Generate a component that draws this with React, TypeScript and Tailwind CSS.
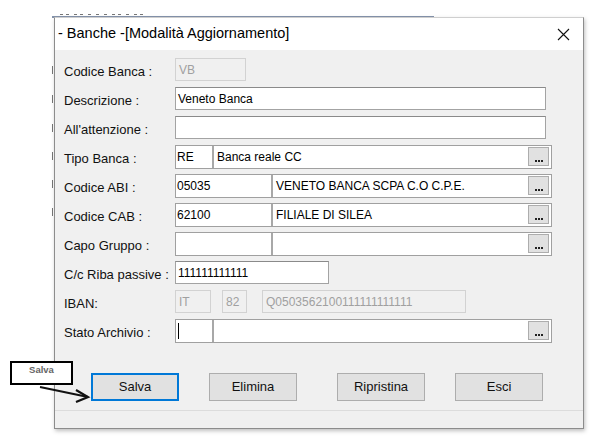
import React from 'react';

const font = { fontFamily: '"Liberation Sans", Arial, sans-serif' };

const Row: React.FC<{ label: string; children: React.ReactNode }> = ({ label, children }) => (
  <div className="flex h-[29px] items-center">
    <div className="w-[111px] mt-[5px] text-[13px] text-[#111] whitespace-nowrap">{label}</div>
    {children}
  </div>
);

const TextBox: React.FC<{ value?: string; width: string }> = ({ value = '', width }) => (
  <div className={`${width} h-[23px] bg-white border border-[#a3a3a3] border-t-[#8a8a8a] flex items-center pl-[2px] text-[12px] text-black whitespace-nowrap overflow-hidden`}>
    {value}
  </div>
);

const DisabledBox: React.FC<{ value: string; width: string }> = ({ value, width }) => (
  <div className={`${width} h-[23px] bg-[#f0f0f0] border border-[#d2d2d2] flex items-center pl-[3px] text-[12px] text-[#a0a0a0] whitespace-nowrap overflow-hidden`}>
    {value}
  </div>
);

const DotsButton = () => (
  <div className="w-[21px] h-[19px] mr-[2px] bg-[#e1e1e1] border border-[#adadad] flex items-end justify-center gap-[1px] pb-[3px]">
    <div className="w-[2px] h-[2px] bg-[#222]" />
    <div className="w-[2px] h-[2px] bg-[#222]" />
    <div className="w-[2px] h-[2px] bg-[#222]" />
  </div>
);

const Combo: React.FC<{ code: string; text: string; codeWidth: string; caret?: boolean }> = ({ code, text, codeWidth, caret }) => (
  <div className="w-[377px] h-[24px] bg-white border border-[#a0a0a0] flex items-center">
    <div className={`${codeWidth} h-full flex items-center pl-[1px] text-[12px] text-black border-r-2 border-[#a8a8a8]`}>
      {caret ? <div className="w-px h-[16px] bg-black ml-[1px]" /> : code}
    </div>
    <div className="flex-1 h-full flex items-center pl-[3px] text-[12px] text-black whitespace-nowrap overflow-hidden">{text}</div>
    <DotsButton />
  </div>
);

const Btn: React.FC<{ label: string; primary?: boolean; className?: string }> = ({ label, primary, className = '' }) => (
  <div
    className={`w-[88px] h-[28px] bg-[#e1e1e1] flex items-center justify-center text-[13px] text-[#111] ${
      primary ? 'border-2 border-[#0078d7]' : 'border border-[#adadad]'
    } ${className}`}
  >
    {label}
  </div>
);

// leftovers of the window behind the dialog (only slivers of its glyphs show)
const topBits = [8, 14, 22, 28, 36, 44, 52, 60, 66, 74, 82, 88];
const sideBits = [4, 33, 62, 90, 118, 146];

export default function App() {
  return (
    <div className="relative w-[600px] h-[444px] bg-white overflow-hidden" style={font}>
      {/* background window peeking out */}
      <div className="absolute left-[52px] top-[12px] w-[382px] h-[6px] overflow-hidden border-b-2 border-[#8594ac]">
        {topBits.map((x) => (
          <div key={x} className="absolute top-[2px] w-[3px] h-[1px] bg-[#777]" style={{ left: x }} />
        ))}
      </div>
      <div className="absolute left-[51px] top-[62px] w-[3px] h-[170px]">
        {sideBits.map((y) => (
          <div key={y} className="absolute left-[1px] w-[1px] h-[8px] bg-[#777]" style={{ top: y }} />
        ))}
      </div>

      {/* dialog */}
      <div className="absolute left-[54px] top-[17px] w-[530px] h-[412px] flex flex-col bg-[#f0f0f0] border border-[#8c8c8c] border-t-[#cfcfcf] shadow-[1px_2px_4px_rgba(0,0,0,0.25)]">
        <div className="h-[32px] bg-white flex items-center justify-between pl-[3px] pr-[13px]">
          <span className="text-[14.5px] text-black whitespace-nowrap">- Banche -[Modalità Aggiornamento]</span>
          <svg width="13" height="13" viewBox="0 0 13 13">
            <path d="M1 1 L12 12 M12 1 L1 12" stroke="#111" strokeWidth="1.1" fill="none" />
          </svg>
        </div>

        <div className="flex-1 flex flex-col pl-[9px] pt-[5px]">
          <Row label="Codice Banca :">
            <DisabledBox value="VB" width="w-[71px]" />
          </Row>
          <Row label="Descrizione :">
            <TextBox value="Veneto Banca" width="w-[371px]" />
          </Row>
          <Row label="All'attenzione :">
            <TextBox width="w-[371px]" />
          </Row>
          <Row label="Tipo Banca :">
            <Combo code="RE" text="Banca reale CC" codeWidth="w-[38px]" />
          </Row>
          <Row label="Codice ABI :">
            <Combo code="05035" text="VENETO BANCA SCPA C.O C.P.E." codeWidth="w-[97px]" />
          </Row>
          <Row label="Codice CAB :">
            <Combo code="62100" text="FILIALE DI SILEA" codeWidth="w-[97px]" />
          </Row>
          <Row label="Capo Gruppo :">
            <Combo code="" text="" codeWidth="w-[97px]" />
          </Row>
          <Row label="C/c Riba passive :">
            <TextBox value="111111111111" width="w-[154px]" />
          </Row>
          <Row label="IBAN:">
            <div className="flex items-center">
              <DisabledBox value="IT" width="w-[36px]" />
              <div className="w-[11px]" />
              <DisabledBox value="82" width="w-[25px]" />
              <div className="w-[15px]" />
              <DisabledBox value="Q0503562100111111111111" width="w-[204px]" />
            </div>
          </Row>
          <Row label="Stato Archivio :">
            <Combo code="" text="" codeWidth="w-[38px]" caret />
          </Row>

          <div className="flex mt-[28px] ml-[27px]">
            <Btn label="Salva" primary />
            <Btn label="Elimina" className="ml-[30px]" />
            <Btn label="Ripristina" className="ml-[40px]" />
            <Btn label="Esci" className="ml-[30px]" />
          </div>
        </div>

        <div className="h-[18px] border-t border-[#dcdcdc]" />
      </div>

      {/* annotation */}
      <div className="absolute left-[10px] top-[361px] w-[63px] h-[24px] bg-white border-2 border-black">
        <div className="pt-[2px] text-center text-[9.5px] font-bold text-[#666] leading-none">Salva</div>
      </div>
      <svg className="absolute left-0 top-0" width="600" height="444" viewBox="0 0 600 444" style={{ pointerEvents: 'none' }}>
        <path d="M40 387 L88 397" stroke="#111" strokeWidth="2" fill="none" />
        <path d="M76 390 L88 397 L76 402" stroke="#111" strokeWidth="2.2" fill="none" />
      </svg>
    </div>
  );
}
